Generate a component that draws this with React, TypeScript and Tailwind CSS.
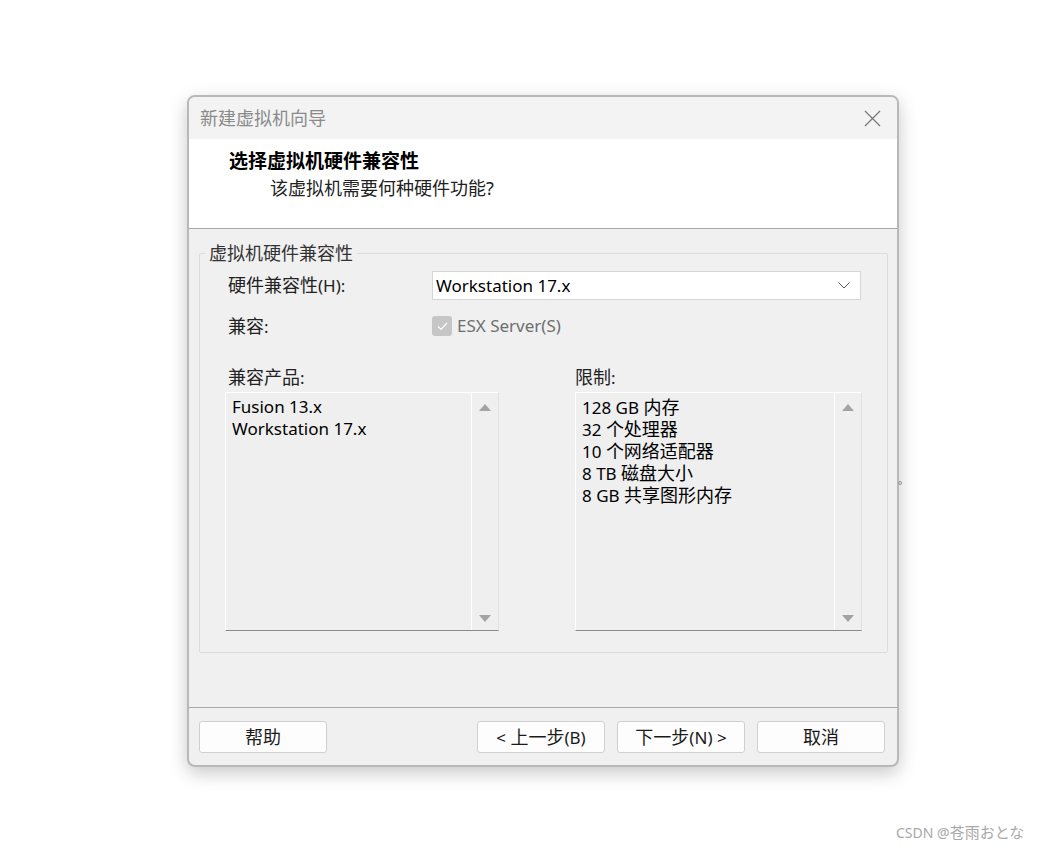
import React from "react";

const font = {
  fontFamily: '"Noto Sans", "Noto Sans CJK SC", sans-serif',
};

// wrap CJK runs so they render a bit wider than the latin text, like the original dialog font
function T({ s, size = "text-[18px]" }: { s: string; size?: string }) {
  const parts = s.split(/([\u3040-\u30ff\u4e00-\u9fff]+)/);
  return (
    <>
      {parts.map((p, i) =>
        /[\u3040-\u30ff\u4e00-\u9fff]/.test(p) ? (
          <span key={i} className={size}>
            {p}
          </span>
        ) : (
          <span key={i}>{p}</span>
        )
      )}
    </>
  );
}

function ScrollCol() {
  return (
    <div className="flex w-[27px] flex-col items-center justify-between border-l border-white pt-[11px] pb-[8px]">
      <svg width="12" height="7" viewBox="0 0 12 7">
        <path d="M6 0 L12 7 L0 7 Z" fill="#a3a3a3" />
      </svg>
      <svg width="12" height="7" viewBox="0 0 12 7">
        <path d="M0 0 L12 0 L6 7 Z" fill="#a3a3a3" />
      </svg>
    </div>
  );
}

function ListBox({ items, width }: { items: string[]; width: string }) {
  return (
    <div
      className={`flex h-[239px] ${width} border-t border-l border-t-white border-l-white border-r border-r-[#e2e2e2] border-b border-b-[#8a8a8a] bg-[#efefef]`}
    >
      <div className="flex-1 pl-[6px] pt-[3px] text-[17px] leading-[22px] text-black">
        {items.map((it) => (
          <div key={it} className="h-[22px] whitespace-pre">
            <T s={it} />
          </div>
        ))}
      </div>
      <ScrollCol />
    </div>
  );
}

function Btn({ label }: { label: string }) {
  return (
    <button className="h-[32px] w-[128px] rounded-[3px] border border-[#d0d0d0] bg-[#fdfdfd] text-[17px] leading-[22px] text-[#1a1a1a]">
      <T s={label} />
    </button>
  );
}

export default function App() {
  return (
    <div className="relative h-[849px] w-[1039px] bg-white" style={font}>
      <div className="pl-[187px] pt-[95px]">
        <div className="flex h-[672px] w-[712px] flex-col overflow-hidden rounded-[8px] border-2 border-[#b8b8b8] bg-[#f0f0f0] shadow-[0_6px_18px_rgba(0,0,0,0.22)]">
          {/* title bar */}
          <div className="flex h-[42px] items-center justify-between bg-[#f3f3f3] pl-[11px] pr-[16px]">
            <span className="text-[18px] text-[#8a8a8a]">新建虚拟机向导</span>
            <svg width="17" height="17" viewBox="0 0 17 17">
              <path d="M1 1 L16 16 M16 1 L1 16" stroke="#7a7a7a" strokeWidth="1.3" />
            </svg>
          </div>

          {/* header */}
          <div className="h-[90px] border-b border-[#a8a8a8] bg-white">
            <div className="pl-[40px] pt-[10px] text-[19px] font-bold leading-[24px] text-black">
              选择虚拟机硬件兼容性
            </div>
            <div className="pl-[81px] pt-[3px] text-[18px] leading-[24px] text-[#222]">
              该虚拟机需要何种硬件功能?
            </div>
          </div>

          {/* body */}
          <div className="h-[479px] border-b border-[#a8a8a8] px-[10px] pt-[14px]">
            <fieldset className="h-[410px] w-[688px] rounded-[2px] border border-[#dcdcdc] px-[25px]">
              <legend className="ml-[-20px] px-[4px] text-[18px] leading-[20px] text-[#333]">
                虚拟机硬件兼容性
              </legend>
              <div className="mt-[8px] flex items-center">
                <span className="w-[207px] pl-[3px] text-[17px] text-[#222]">
                  <T s="硬件兼容性(H):" />
                </span>
                <div className="flex h-[29px] w-[429px] items-center justify-between border border-[#d6d6d6] bg-white pl-[3px] pr-[10px]">
                  <span className="text-[17px] text-black">Workstation 17.x</span>
                  <svg width="12" height="7" viewBox="0 0 12 7">
                    <path d="M0.5 0.5 L6 6 L11.5 0.5" stroke="#555" fill="none" strokeWidth="1" />
                  </svg>
                </div>
              </div>
              <div className="mt-[12px] flex h-[28px] items-center">
                <span className="w-[207px] pl-[3px] text-[17px] text-[#222]">
                  <T s="兼容:" />
                </span>
                <div className="flex items-center gap-[5px]">
                  <div className="flex h-[20px] w-[20px] items-center justify-center rounded-[3px] bg-[#c6c6c6]">
                    <svg width="11" height="9" viewBox="0 0 11 9">
                      <path d="M1 4.5 L4 7.5 L10 1" stroke="#fff" fill="none" strokeWidth="1.2" />
                    </svg>
                  </div>
                  <span className="text-[17px] text-[#6e6e6e]">ESX Server(S)</span>
                </div>
              </div>
              <div className="mt-[26px] flex">
                <div className="flex w-[350px] flex-col">
                  <span className="h-[22px] pl-[3px] text-[17px] leading-[22px] text-[#222]">
                    <T s="兼容产品:" />
                  </span>
                  <div className="mt-[4px]">
                    <ListBox width="w-[274px]" items={["Fusion 13.x", "Workstation 17.x"]} />
                  </div>
                </div>
                <div className="flex flex-col">
                  <span className="h-[22px] text-[17px] leading-[22px] text-[#222]">
                    <T s="限制:" />
                  </span>
                  <div className="mt-[4px]">
                    <ListBox
                      width="w-[287px]"
                      items={[
                        "128 GB 内存",
                        "32 个处理器",
                        "10 个网络适配器",
                        "8 TB 磁盘大小",
                        "8 GB 共享图形内存",
                      ]}
                    />
                  </div>
                </div>
              </div>
            </fieldset>
          </div>

          {/* footer */}
          <div className="flex flex-1 items-start justify-between pl-[10px] pr-[12px] pt-[13px]">
            <Btn label="帮助" />
            <div className="flex gap-[12px]">
              <Btn label="< 上一步(B)" />
              <Btn label="下一步(N) >" />
              <Btn label="取消" />
            </div>
          </div>
        </div>
      </div>

      <span className="absolute left-[898px] top-[478px] text-[10px] text-[#777]">°</span>
      <span className="absolute left-[896px] top-[821px] text-[14px] text-[#a8a8a8]">
        <T s="CSDN @苍雨おとな" size="text-[15px]" />
      </span>
    </div>
  );
}
